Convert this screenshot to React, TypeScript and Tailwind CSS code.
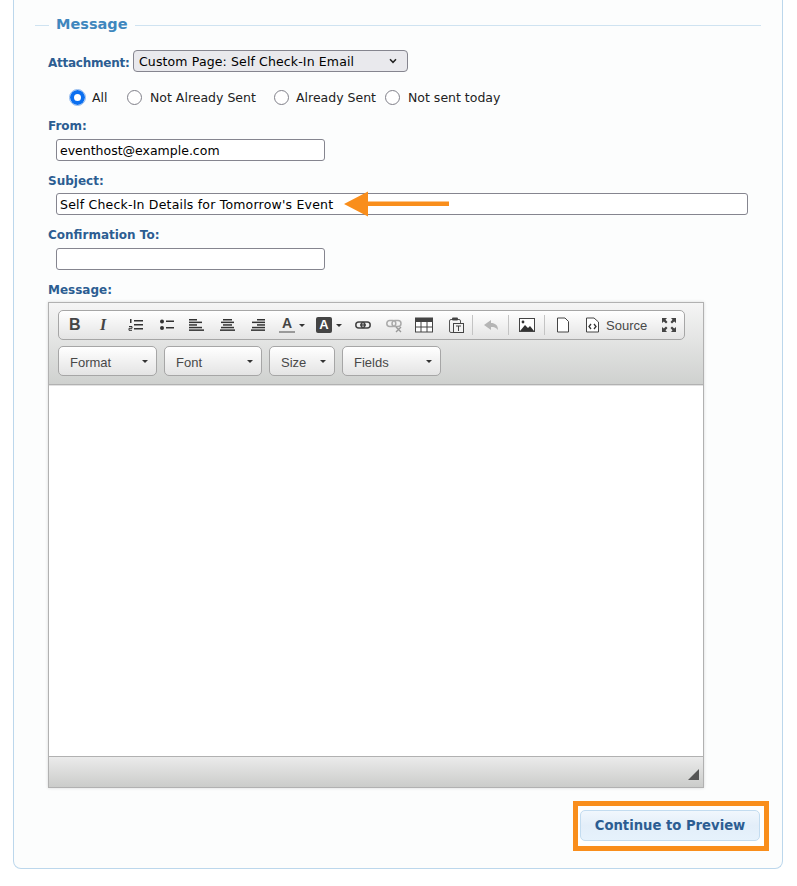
import React from "react";

const I = ({ children, w = 16, cls = "" }: { children: React.ReactNode; w?: number; cls?: string }) => (
  <svg width={w} height={16} viewBox={`0 0 ${w} 16`} className={`block shrink-0 ${cls}`}>{children}</svg>
);

const Lines = ({ kind }: { kind: "l" | "c" | "r" }) => {
  const rows: [number, number][] = kind === "l"
    ? [[0, 8], [0, 13], [0, 8], [0, 13], [0, 15]]
    : kind === "c"
    ? [[3, 9], [1, 13], [3, 9], [1, 13], [0, 15]]
    : [[6, 8], [1, 13], [6, 8], [1, 13], [0, 14]];
  return (
    <I>
      {rows.map(([x, w], i) => (
        <rect key={i} x={x} y={2 + i * 2.6} width={w} height={1.5} fill="#333" />
      ))}
    </I>
  );
};

const Sep = () => <div className="h-[20px] w-px bg-[#c4c4c4] shrink-0" />;
const Caret = () => <span className="block w-0 h-0 border-x-[3px] border-x-transparent border-t-[3px] border-t-[#333]" />;

const Combo = ({ label, w }: { label: string; w: string }) => (
  <div className={`${w} h-[30px] flex items-center justify-between pl-[11px] pr-[8px] rounded-[5px] border border-[#a6a6a6] bg-gradient-to-b from-[#ffffff] to-[#e4e4e4] text-[13px] text-[#484848] font-['Liberation_Sans',sans-serif]`}>
    <span className="pt-[3px]">{label}</span>
    <Caret />
  </div>
);

const Field = ({ w, value = "", cls = "" }: { w: string; value?: string; cls?: string }) => (
  <div className="pl-2">
    <div className={`${w} h-[22px] rounded-[3px] border border-[#85858f] bg-white px-[3px] pt-[3px] flex items-center text-[12.5px] text-black ${cls}`}>{value}</div>
  </div>
);

const Label = ({ children, cls = "" }: { children: React.ReactNode; cls?: string }) => (
  <div className={`text-[12px] leading-[16px] font-bold text-[#2c5d92] ${cls}`}>{children}</div>
);

const Radio = ({ on = false }: { on?: boolean }) => (
  <span className={`block w-[15px] h-[15px] rounded-full shrink-0 bg-white ${on ? "border-[4px] border-[#0b6ff0] outline outline-1 outline-[#8fb8ee]" : "border border-[#808089]"}`} />
);

export default function App() {
  return (
    <div className="w-[797px] h-[886px] bg-white overflow-hidden font-['DejaVu_Sans',sans-serif]">
      <div className="ml-[13px] w-[770px] h-[869px] border-x border-b border-[#bcd7ec] rounded-b-[8px] bg-[#fcfdfd] px-[34px] flex flex-col">
        <div className="flex items-center h-[20px] mt-[15px] -mx-[13px]">
          <div className="w-[14px] h-px bg-[#cfe3f1]" />
          <div className="px-[7px] text-[14.5px] font-bold text-[#3f87be]">Message</div>
          <div className="flex-1 h-px bg-[#cfe3f1]" />
        </div>

        <div className="flex items-center mt-[15px] h-[22px]">
          <Label cls="w-[85px] shrink-0 whitespace-nowrap tracking-[-0.25px] pt-[3px]">Attachment:</Label>
          <div className="w-[275px] h-[22px] rounded-[4px] border border-[#85858f] bg-[#e9e9ed] pl-[5px] pr-[10px] flex items-center justify-between text-[12.5px] tracking-[0.13px] text-black">
            <span className="pt-[3px]">Custom Page: Self Check-In Email</span>
            <svg width="8" height="6" viewBox="0 0 8 6"><path d="M1 1.2 L4 4.3 L7 1.2" fill="none" stroke="#222" strokeWidth="1.5" /></svg>
          </div>
        </div>

        <div className="flex items-center h-[16px] mt-[17px] pl-[22px] text-[12.5px] text-[#222]">
          <Radio on />
          <span className="ml-[7px] w-[35px] pt-[3px]">All</span>
          <Radio />
          <span className="ml-[8px] w-[124px] whitespace-nowrap pt-[3px]">Not Already Sent</span>
          <Radio />
          <span className="ml-[7px] w-[89px] whitespace-nowrap pt-[3px]">Already Sent</span>
          <Radio />
          <span className="ml-[8px] whitespace-nowrap pt-[3px]">Not sent today</span>
        </div>

        <Label cls="mt-[13px]">From:</Label>
        <div className="mt-[5px]"><Field w="w-[269px]" value="eventhost@example.com" /></div>

        <Label cls="mt-[12px]">Subject:</Label>
        <div className="mt-[4px] relative">
          <Field w="w-[692px]" cls="tracking-[0.2px]" value="Self Check-In Details for Tomorrow's Event" />
          <svg width="108" height="26" viewBox="0 0 108 26" className="absolute left-[296px] -top-[2px]">
            <path d="M0 13 L24 0.5 V10.5 H105 V15 H24 V25.5 Z" fill="#f98e1c" />
          </svg>
        </div>

        <Label cls="mt-[12px]">Confirmation To:</Label>
        <div className="mt-[5px]"><Field w="w-[269px]" /></div>

        <Label cls="mt-[12px]">Message:</Label>

        <div className="mt-[4px] w-[656px] h-[486px] border border-[#b1b1b1] shadow-[0_0_3px_rgba(0,0,0,0.15)] flex flex-col bg-white">
          <div className="h-[82px] shrink-0 border-b border-[#b1b1b1] bg-gradient-to-b from-[#f5f5f5] to-[#cfd1cf] pl-[9px] pt-[7px]">
            <div className="w-[627px] h-[30px] rounded-[5px] border border-[#a6a6a6] bg-gradient-to-b from-[#ffffff] to-[#e4e4e4] flex items-center pl-[10px] font-['Liberation_Sans',sans-serif]">
              <div className="w-[31px] shrink-0 text-[16px] font-bold text-[#444] leading-none">B</div>
              <div className="w-[28px] shrink-0 text-[16px] font-bold italic text-[#444] font-['Liberation_Serif',serif] leading-none">I</div>
              <div className="w-[31px] shrink-0">
                <I>
                  <rect x="6" y="3" width="9" height="1.5" fill="#333" />
                  <rect x="6" y="7" width="9" height="1.5" fill="#333" />
                  <rect x="6" y="11" width="9" height="1.5" fill="#333" />
                  <rect x="2" y="2" width="1.5" height="4" fill="#333" />
                  <path d="M1 9.500h3v1.800H1v2h3" fill="none" stroke="#333" strokeWidth="1" />
                </I>
              </div>
              <div className="w-[30px] shrink-0">
                <I>
                  <circle cx="3" cy="4.500" r="2" fill="#333" />
                  <circle cx="3" cy="11" r="2" fill="#333" />
                  <rect x="7" y="3.500" width="8" height="1.500" fill="#333" />
                  <rect x="7" y="10" width="8" height="1.500" fill="#333" />
                </I>
              </div>
              <div className="w-[31px] shrink-0"><Lines kind="l" /></div>
              <div className="w-[31px] shrink-0"><Lines kind="c" /></div>
              <div className="w-[28px] shrink-0"><Lines kind="r" /></div>
              <div className="w-[37px] shrink-0 flex items-center gap-[4px]">
                <div className="w-[16px] flex flex-col items-center leading-none text-[14px] font-bold text-[#444]">
                  <span className="h-[13px] leading-[13px]">A</span>
                  <span className="w-[16px] h-[2px] mt-[1px] bg-[#9a9a9a]" />
                </div>
                <Caret />
              </div>
              <div className="w-[39px] shrink-0 flex items-center gap-[4px]">
                <div className="w-[16px] h-[16px] rounded-[2px] bg-[#444] text-[13px] leading-[16px] font-bold text-white text-center shrink-0">A</div>
                <Caret />
              </div>
              <div className="w-[31px] shrink-0">
                <I>
                  <rect x="0.800" y="5" width="9" height="6" rx="3" fill="none" stroke="#444" strokeWidth="1.500" />
                  <rect x="6.200" y="5" width="9" height="6" rx="3" fill="none" stroke="#444" strokeWidth="1.500" />
                  <rect x="5" y="7.300" width="6" height="1.400" fill="#444" />
                </I>
              </div>
              <div className="w-[29px] shrink-0">
                <I>
                  <rect x="0.800" y="3.500" width="9" height="6" rx="3" fill="none" stroke="#aaa" strokeWidth="1.500" />
                  <rect x="6" y="3.500" width="9" height="6" rx="3" fill="none" stroke="#aaa" strokeWidth="1.500" />
                  <path d="M10 10l5 5M15 10l-5 5" stroke="#999" strokeWidth="1.400" />
                </I>
              </div>
              <div className="w-[33px] shrink-0">
                <I w={18}>
                  <rect x="0.500" y="1" width="17" height="14" fill="#fff" stroke="#444" />
                  <rect x="0.500" y="1" width="17" height="4" fill="#444" />
                  <path d="M6 5v10M12 5v10M1 10h16" stroke="#444" />
                </I>
              </div>
              <div className="w-[24px] shrink-0">
                <I>
                  <rect x="1.500" y="2.500" width="11" height="13" rx="1.500" fill="none" stroke="#555" />
                  <rect x="4" y="0.500" width="6" height="3" rx="1" fill="#444" />
                  <rect x="5.500" y="6.500" width="10" height="9" fill="#f2f2f2" stroke="#444" />
                  <path d="M8 9h5M10.500 9v5" stroke="#444" />
                </I>
              </div>
              <Sep />
              <div className="w-[35px] shrink-0 pl-[10px]">
                <I>
                  <path d="M1 8 L8 3 V6 C12 6 15 8 15 13 C13 10.500 11 10 8 10 V13 Z" fill="#b5b5b5" />
                </I>
              </div>
              <Sep />
              <div className="w-[35px] shrink-0 pl-[10px]">
                <I>
                  <rect x="0.500" y="1.500" width="15" height="13" fill="#fff" stroke="#444" />
                  <path d="M1 14 L6 8 L9 11 L11 9 L15 14 Z" fill="#333" />
                  <circle cx="4" cy="5" r="1.400" fill="#333" />
                </I>
              </div>
              <Sep />
              <div className="w-[41px] shrink-0 pl-[10px]">
                <I>
                  <path d="M2.500 1 H10 L13.500 4.500 V15 H2.500 Z" fill="#fff" stroke="#444" />
                </I>
              </div>
              <div className="w-[20px] shrink-0">
                <I>
                  <path d="M0.500 1 H8 L12.500 5 V15 H0.500 Z" fill="#fff" stroke="#444" />
                  <path d="M5 7 L3 9.500 L5 12 M8 7 L10 9.500 L8 12" fill="none" stroke="#333" strokeWidth="1.300" />
                </I>
              </div>
              <div className="w-[55px] shrink-0 text-[13px] text-[#484848] pt-[2px]">Source</div>
              <div className="w-[16px] shrink-0">
                <I>
                  <path d="M1 1h5L4.500 2.800 6.500 5 5 6.500 2.800 4.500 1 6zM15 1v5l-1.800-1.500L11 6.500 9.500 5l2-2.200L10 1zM1 15v-5l1.800 1.500L5 9.500 6.500 11l-2 2.200L6 15zM15 15h-5l1.500-1.800L9.500 11 11 9.500l2.200 2L15 10z" fill="#444" />
                </I>
              </div>
            </div>
            <div className="mt-[6px] flex gap-[7px]">
              <Combo label="Format" w="w-[99px]" />
              <Combo label="Font" w="w-[98px]" />
              <Combo label="Size" w="w-[66px]" />
              <Combo label="Fields" w="w-[99px]" />
            </div>
          </div>
          <div className="flex-1 border-t border-[#e2e2e2] bg-white" />
          <div className="h-[31px] shrink-0 border-t border-[#b1b1b1] bg-gradient-to-b from-[#ebebeb] to-[#cbccca] flex items-end justify-end pr-[4px] pb-[7px]">
            <svg width="11" height="11" viewBox="0 0 11 11"><path d="M11 0 V11 H0 Z" fill="#555" /></svg>
          </div>
        </div>

        <div className="flex justify-end mt-[13px] -mr-[20px]">
          <div className="border-[5px] border-[#f98e1c] bg-white w-[196px] h-[50px] pl-[2px] pr-[4px] pt-[4px] translate-x-[1px]">
            <div className="h-[31px] rounded-[5px] border border-[#c3dcf0] bg-gradient-to-b from-[#f1f7fd] via-[#e3eef9] to-[#e6f2fc] flex items-center justify-center text-[13.2px] font-bold text-[#2c5d92] whitespace-nowrap">
              Continue to Preview
            </div>
          </div>
        </div>
      </div>
    </div>
  );
}
